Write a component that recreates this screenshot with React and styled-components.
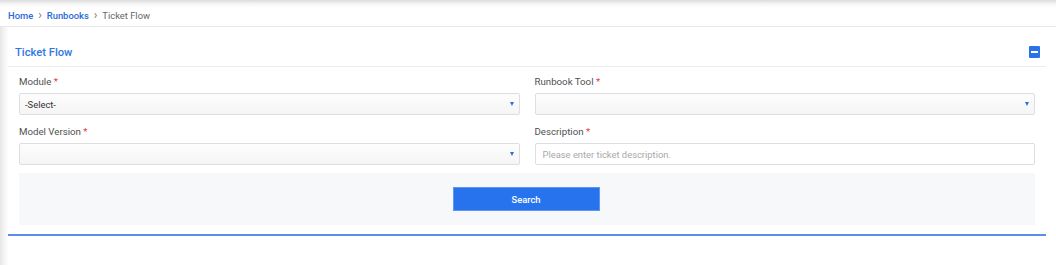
import styled, { createGlobalStyle } from 'styled-components';

const GlobalStyle = createGlobalStyle`
  body {
    margin: 0;
    background: #fff;
    font-family: Roboto, "Liberation Sans", sans-serif;
  }
`;

export default function App() {
  return (
    <>
      <GlobalStyle />
      <TopBar>
        <Crumb href="#">Home</Crumb>
        <Chevron>›</Chevron>
        <Crumb href="#">Runbooks</Crumb>
        <Chevron>›</Chevron>
        <Current>Ticket Flow</Current>
      </TopBar>
      <Page>
        <Panel>
          <PanelHeader>
            <Title>Ticket Flow</Title>
            <Collapse aria-label="collapse">
              <span />
            </Collapse>
          </PanelHeader>
          <PanelBody>
            <FieldGrid>
              <Field>
                <Label>
                  Module <Req>*</Req>
                </Label>
                <Select>
                  <span>-Select-</span>
                  <Caret />
                </Select>
              </Field>
              <Field>
                <Label>
                  Runbook Tool <Req>*</Req>
                </Label>
                <Select>
                  <span />
                  <Caret />
                </Select>
              </Field>
              <Field>
                <Label>
                  Model Version <Req>*</Req>
                </Label>
                <Select>
                  <span />
                  <Caret />
                </Select>
              </Field>
              <Field>
                <Label>
                  Description <Req>*</Req>
                </Label>
                <Input placeholder="Please enter ticket description." />
              </Field>
            </FieldGrid>
            <Footer>
              <SearchButton>Search</SearchButton>
            </Footer>
          </PanelBody>
        </Panel>
      </Page>
    </>
  );
}

const TopBar = styled.div`
  height: 27px;
  display: flex;
  align-items: center;
  gap: 5px;
  padding: 4px 8px 0;
  box-sizing: border-box;
  background: linear-gradient(to bottom, #dcdcdc 0, #f6f6f6 4px, #fff 8px);
  border-bottom: 1px solid #e8e8e8;
  font-size: 9.4px;
`;

const Crumb = styled.a`
  color: #2a6bd6;
  font-weight: 500;
  text-decoration: none;
`;

const Chevron = styled.span`
  color: #777;
  font-size: 12px;
  line-height: 1;
  margin-top: -1px;
`;

const Current = styled.span`
  color: #666;
`;

const Page = styled.div`
  padding: 0 10px 30px 8px;
  background: linear-gradient(to right, #e6e6e6 0, #f4f4f4 4px, #fff 9px);
`;

const Panel = styled.section`
  background: #fff;
  border-bottom: 2px solid #5b8ee8;
`;

const PanelHeader = styled.div`
  height: 40px;
  display: flex;
  align-items: center;
  justify-content: space-between;
  padding: 11px 6px 0 7px;
  box-sizing: border-box;
  border-bottom: 1px solid #ececec;
`;

const Title = styled.h2`
  margin: 0;
  font-size: 11.2px;
  font-weight: 500;
  color: #2f78e3;
`;

const Collapse = styled.button`
  width: 11px;
  height: 12px;
  padding: 0;
  border: none;
  border-radius: 1px;
  background: #2b72ea;
  display: flex;
  align-items: center;
  justify-content: center;

  span {
    width: 7px;
    height: 2px;
    background: #fff;
  }
`;

const PanelBody = styled.div`
  padding: 8px 11px 9px;
`;

const FieldGrid = styled.div`
  display: grid;
  grid-template-columns: 1fr 1fr;
  column-gap: 15px;
  row-gap: 10px;
`;

const Field = styled.div`
  display: flex;
  flex-direction: column;
`;

const Label = styled.label`
  font-size: 9.7px;
  color: #4f4f4f;
  line-height: 13px;
  margin-bottom: 5px;
`;

const Req = styled.span`
  color: #e0413c;
`;

const Select = styled.div`
  height: 22px;
  box-sizing: border-box;
  border: 1px solid #dcdee2;
  border-radius: 2px;
  background: linear-gradient(to bottom, #fdfdfd, #f5f5f5);
  display: flex;
  align-items: center;
  justify-content: space-between;
  padding: 0 5px 0 5px;
  font-size: 9.4px;
  color: #333;
`;

const Caret = styled.span`
  width: 0;
  height: 0;
  border-left: 2.5px solid transparent;
  border-right: 2.5px solid transparent;
  border-top: 4px solid #2b6fdc;
`;

const Input = styled.input`
  height: 22px;
  box-sizing: border-box;
  border: 1px solid #dcdee2;
  border-radius: 2px;
  padding: 0 7px;
  font-family: inherit;
  font-size: 9.4px;
  color: #333;
  outline: none;

  &::placeholder {
    color: #a9a9a9;
  }
`;

const Footer = styled.div`
  margin-top: 8px;
  height: 52px;
  background: #f7f8fa;
  display: flex;
  align-items: center;
  justify-content: center;
`;

const SearchButton = styled.button`
  width: 147px;
  height: 24px;
  border: 1px solid #5d97f3;
  background: #2773ee;
  color: #fff;
  font-family: inherit;
  font-size: 9.4px;
  font-weight: 500;
  margin-left: -2px;
`;
